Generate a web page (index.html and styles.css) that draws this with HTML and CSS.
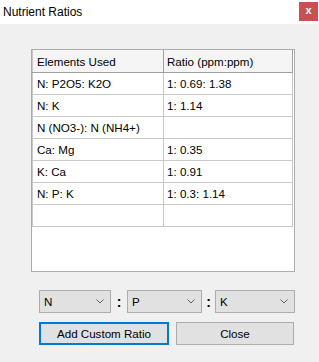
FILE: index.html
```html
<!DOCTYPE html>
<html lang="en">
<head>
    <meta charset="UTF-8">
    <meta name="viewport" content="width=device-width, initial-scale=1.0">
    <title>Nutrient Ratios</title>
    <link rel="stylesheet" href="styles.css">
</head>
<body>
    <div class="window">
        <div class="titlebar">
            <span class="title">Nutrient Ratios</span>
            <div class="close-x">x</div>
        </div>
        <div class="content">
            <div class="listbox">
                <table class="grid">
                    <thead>
                        <tr>
                            <th class="col-name">Elements Used</th>
                            <th>Ratio (ppm:ppm)</th>
                        </tr>
                    </thead>
                    <tbody>
                        <tr><td>N: P2O5: K2O</td><td>1: 0.69: 1.38</td></tr>
                        <tr><td>N: K</td><td>1: 1.14</td></tr>
                        <tr><td>N (NO3-): N (NH4+)</td><td></td></tr>
                        <tr><td>Ca: Mg</td><td>1: 0.35</td></tr>
                        <tr><td>K: Ca</td><td>1: 0.91</td></tr>
                        <tr><td>N: P: K</td><td>1: 0.3: 1.14</td></tr>
                        <tr><td></td><td></td></tr>
                    </tbody>
                </table>
            </div>

            <div class="pickers">
                <div class="combo combo-1">
                    <span>N</span>
                    <svg class="chevron" width="8" height="5" viewBox="0 0 8 5"><polyline points="0.5,0.5 4,4 7.5,0.5" fill="none" stroke="#606060" stroke-width="1"/></svg>
                </div>
                <span class="colon colon-1">:</span>
                <div class="combo combo-2">
                    <span>P</span>
                    <svg class="chevron" width="8" height="5" viewBox="0 0 8 5"><polyline points="0.5,0.5 4,4 7.5,0.5" fill="none" stroke="#606060" stroke-width="1"/></svg>
                </div>
                <span class="colon colon-2">:</span>
                <div class="combo combo-3">
                    <span>K</span>
                    <svg class="chevron" width="8" height="5" viewBox="0 0 8 5"><polyline points="0.5,0.5 4,4 7.5,0.5" fill="none" stroke="#606060" stroke-width="1"/></svg>
                </div>
            </div>

            <div class="actions">
                <button class="btn btn-add">Add Custom Ratio</button>
                <button class="btn btn-close">Close</button>
            </div>
        </div>
    </div>
</body>
</html>
```

FILE: styles.css
```css
body {
    margin: 0;
    font-family: "Liberation Sans", Arial, sans-serif;
    background-color: #f0f0f0;
    color: #000;
}
.window {
    width: 319px;
    height: 362px;
    background-color: #f0f0f0;
}
.titlebar {
    height: 24px;
    background-color: #fff;
    display: flex;
    align-items: flex-start;
    justify-content: space-between;
}
.title {
    font-size: 12px;
    margin-left: 3px;
    margin-top: 5px;
}
.close-x {
    width: 19px;
    height: 19px;
    margin-top: 2px;
    margin-right: 1px;
    background-color: #c75050;
    color: #fff;
    font-size: 11px;
    font-weight: bold;
    line-height: 17px;
    text-align: center;
}
.content {
    padding: 25px 0 0 31px;
}
.listbox {
    width: 264px;
    height: 223px;
    box-sizing: border-box;
    border: 1px solid #adadad;
    background-color: #fff;
}
.grid {
    width: 261px;
    border-collapse: collapse;
    table-layout: fixed;
    font-size: 11.6px;
}
.grid th, .grid td {
    height: 21px;
    padding: 0 0 0 3px;
    text-align: left;
    font-weight: normal;
    border-left: 1px solid #c8c8c8;
    border-right: 1px solid #c8c8c8;
    border-bottom: 1px solid #c8c8c8;
    white-space: nowrap;
}
.grid th {
    height: 22px;
    background-color: #f5f5f5;
    border-bottom: 1px solid #a0a0a0;
    border-right-color: #a0a0a0;
}
.grid th:first-child, .grid td:first-child {
    padding-left: 4px;
}
.col-name {
    width: 126px;
}
.pickers {
    display: flex;
    align-items: center;
    margin: 18px 0 0 8px;
}
.combo {
    height: 23px;
    box-sizing: border-box;
    border: 1px solid #adadad;
    background-color: #e1e1e1;
    display: flex;
    align-items: center;
    justify-content: space-between;
    padding: 0 6px 0 4px;
    font-size: 11.6px;
}
.combo-1 { width: 72px; }
.combo-2 { width: 75px; }
.combo-3 { width: 80px; }
.colon {
    font-size: 14px;
    font-weight: bold;
    text-align: center;
}
.colon-1 { width: 16px; }
.colon-2 { width: 13px; }
.actions {
    display: flex;
    gap: 7px;
    margin: 9px 0 0 8px;
}
.btn {
    height: 23px;
    box-sizing: border-box;
    border: 1px solid #adadad;
    background-color: #e1e1e1;
    font-family: "Liberation Sans", Arial, sans-serif;
    font-size: 11.6px;
    color: #000;
    padding: 0;
}
.btn-add {
    width: 130px;
    border: 2px solid #0078d7;
}
.btn-close {
    width: 118px;
}
```
